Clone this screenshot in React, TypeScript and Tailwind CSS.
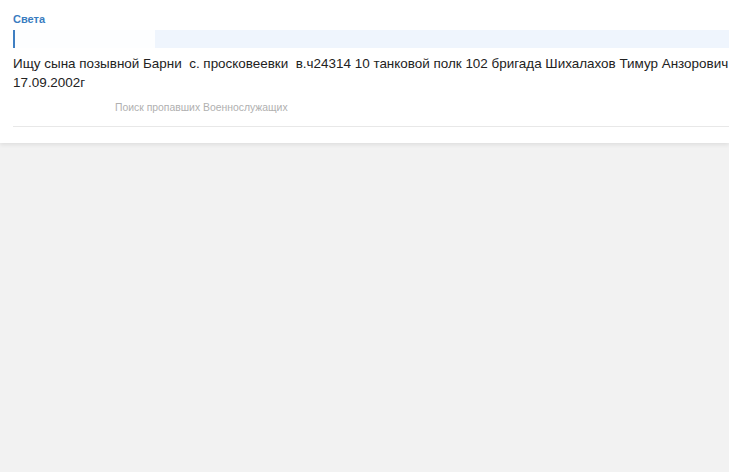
export default function App() {
  return (
    <div className="min-h-[472px] w-[729px] overflow-hidden bg-[#f2f2f2] font-['Liberation_Sans',Arial,sans-serif]">
      <div className="bg-white pl-[13px] pt-[12px] pb-[16px] shadow-[0_2px_4px_rgba(0,0,0,0.08)]">
        <div className="text-[11px] font-bold leading-[14px] text-[#3a7cc0]">Света</div>
        <div className="mt-[4px] flex h-[18px] border-l-2 border-[#3f7fc2] bg-[#eff5fd]">
          <div className="w-[140px] bg-white/90" />
        </div>
        <div className="mt-[6px] whitespace-pre text-[13.45px] leading-[19px] text-[#222]">
          <div>Ищу сына позывной Барни  с. просковеевки  в.ч24314 10 танковой полк 102 бригада Шихалахов Тимур Анзорович</div>
          <div>17.09.2002г</div>
        </div>
        <div className="mt-[9px] pl-[102px] text-[10.4px] leading-[13px] text-[#b0b0b0]">Поиск пропавших Военнослужащих</div>
        <div className="mt-[12px] h-px bg-[#e8e8e8]" />
      </div>
    </div>
  )
}
